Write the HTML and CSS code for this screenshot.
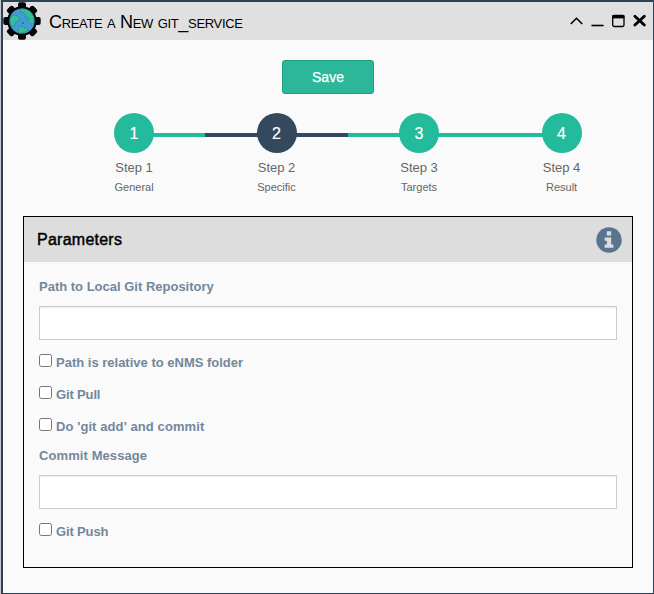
FILE: index.html
```html
<!DOCTYPE html>
<html lang="en">
<head>
<meta charset="utf-8">
<title>Create a New git_service</title>
<link rel="stylesheet" href="styles.css">
</head>
<body>
<div class="panel">
  <header class="titlebar">
    <svg class="logo" width="38" height="38" viewBox="0 0 38 38">
      <g fill="#050505">
        <circle cx="19" cy="19" r="14.8"/>
        <rect x="15" y="0.3" width="8" height="37.4" rx="2"/>
        <rect x="15" y="0.3" width="8" height="37.4" rx="2" transform="rotate(45 19 19)"/>
        <rect x="15" y="0.3" width="8" height="37.4" rx="2" transform="rotate(90 19 19)"/>
        <rect x="15" y="0.3" width="8" height="37.4" rx="2" transform="rotate(135 19 19)"/>
      </g>
      <circle cx="19" cy="19" r="12.6" fill="#429bd5"/>
      <g fill="#35bd9b" stroke="#1f7f88" stroke-width=".5">
        <path d="M7 18Q7.500 14 10 13L14 13.500L17 16L16.500 18.500L13 20L12 23L9 24.500Q6.500 21 7 18Z"/>
        <path d="M17 7Q24 6 28.500 11Q32 16 30.800 21.500L28 22L25 19L26 16L22 15L22.500 12L18 10Z"/>
        <path d="M15 25.500L19 24L22 26L26 27.500Q21 32 15.500 31Z"/>
      </g>
      <circle cx="20" cy="21" r=".9" fill="#176c78"/>
    </svg>
    <h1 class="title">Create a New git_service</h1>
    <div class="controls">
      <svg width="80" height="20" viewBox="0 0 80 20" fill="none" stroke="#000">
        <path d="M2.8 13L8.5 7.3L14.2 13" stroke-width="1.6"/>
        <path d="M23.4 14.5H35.6" stroke-width="1.6"/>
        <rect x="44.7" y="4.4" width="11.3" height="11.1" rx="1.4" stroke-width="1.3"/>
        <path d="M44.4 5.8H56.4" stroke-width="3.2"/>
        <path d="M66.9 5.2L76.3 14M76.3 5.2L66.9 14" stroke-width="2.9" stroke-linecap="round"/>
      </svg>
    </div>
  </header>
  <main class="content">
    <button class="save" type="button">Save</button>
    <ol class="steps">
      <li class="step first"><span class="num">1</span><span class="name">Step 1</span><small>General</small></li>
      <li class="step active"><span class="num">2</span><span class="name">Step 2</span><small>Specific</small></li>
      <li class="step"><span class="num">3</span><span class="name">Step 3</span><small>Targets</small></li>
      <li class="step last"><span class="num">4</span><span class="name">Step 4</span><small>Result</small></li>
    </ol>
    <section class="card">
      <div class="card-head">
        <h2>Parameters</h2>
        <svg width="26" height="26" viewBox="0 0 26 26">
          <circle cx="13" cy="13" r="12.7" fill="#5a738e"/>
          <path d="M10.8 4.2h4.4v4.2h-4.4zM8.7 10.4h6.5v7h2.2v3.4H8.7v-3.4h2.2v-3.6H8.7z" fill="#ddd"/>
        </svg>
      </div>
      <form class="form">
        <label class="label" for="path">Path to Local Git Repository</label>
        <input class="field" id="path" type="text">
        <label class="check"><input type="checkbox"><span>Path is relative to eNMS folder</span></label>
        <label class="check"><input type="checkbox"><span class="tight">Git Pull</span></label>
        <label class="check"><input type="checkbox"><span class="loose">Do 'git add' and commit</span></label>
        <label class="label second loose" for="message">Commit Message</label>
        <input class="field" id="message" type="text">
        <label class="check"><input type="checkbox"><span class="tight">Git Push</span></label>
      </form>
    </section>
  </main>
</div>
</body>
</html>
```
FILE: styles.css
```css
* { box-sizing: border-box; }
body {
  margin: 0;
  padding-left: 1px;
  height: 594px;
  overflow: hidden;
  background: #c5c8ce;
  font-family: "Liberation Sans", Arial, sans-serif;
}
.panel {
  height: 594px;
  border: solid #2c4257;
  border-width: 2px 1px 1px 2px;
  background: #fafafa;
}
.titlebar {
  display: flex;
  align-items: center;
  height: 38px;
  background: #e0e0e0;
  color: #000;
}
.logo { flex: none; }
.title {
  margin: 0 auto 0 8px;
  padding-top: 2px;
  font-size: 18px;
  font-weight: 400;
  font-variant: small-caps;
  letter-spacing: -.33px;
  line-height: 36px;
}
.controls { height: 20px; margin-right: 5px; }
.controls svg { display: block; }
.content { padding: 20px 20px 0; }
.save {
  display: block;
  width: 92px;
  height: 34px;
  margin: 0 auto;
  padding: 0;
  border: 1px solid #1f9d80;
  border-radius: 3px;
  background: #2db79a;
  color: #fff;
  font: 14px/32px "Liberation Sans", Arial, sans-serif;
  -webkit-text-stroke: .25px #fff;
}
.steps {
  display: flex;
  list-style: none;
  margin: 19px 0 0 39.8px;
  padding: 0;
  width: 570px;
  height: 103px;
}
.step {
  display: flex;
  flex: 1;
  flex-direction: column;
  align-items: center;
  color: #666;
  background: linear-gradient(#23bb9c, #23bb9c) 0 20px / 100% 4px no-repeat;
}
.step.first { background-position: 100% 20px; background-size: 50% 4px; }
.step.last { background-size: 50% 4px; }
.step.active { background-image: linear-gradient(#34495e, #34495e); }
.num {
  width: 40px;
  height: 40px;
  border-radius: 50%;
  background: #23bb9c;
  color: #fff;
  font-size: 16px;
  line-height: 41px;
  text-align: center;
  -webkit-text-stroke: .2px #fff;
}
.active .num { background: #34495e; }
.name { margin-top: 6px; font-size: 13px; line-height: 18px; }
.step small { margin-top: 3px; font-size: 11px; line-height: 15px; }
.card {
  width: 610px;
  height: 352px;
  border: 1px solid #000;
}
.card-head {
  display: flex;
  align-items: center;
  justify-content: space-between;
  height: 45px;
  padding: 0 10px 0 13px;
  background: #ddd;
  color: #000;
}
.card-head h2 {
  margin: 0;
  font-size: 16px;
  font-weight: 400;
  letter-spacing: .25px;
  -webkit-text-stroke: .45px #000;
}
.form { padding: 16px 15px 0; }
.label, .check {
  color: #73879c;
  font-size: 13px;
  font-weight: 700;
}
.label { display: block; height: 28px; line-height: 18px; }
.loose { letter-spacing: .09px; }
.tight { letter-spacing: -.15px; }
.field {
  display: block;
  width: 578px;
  height: 34px;
  margin: 0 0 11px;
  border: 1px solid #ccc;
  border-radius: 0;
  background: #fff;
  box-shadow: inset 0 1px 1px rgba(0, 0, 0, .075);
}
.check { display: flex; height: 32px; line-height: 24px; }
.check input { width: 13px; height: 13px; margin: 3px 4px 0 0; }
```
